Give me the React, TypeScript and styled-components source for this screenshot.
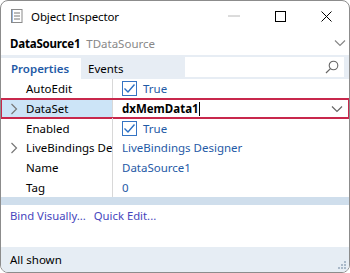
import React from "react";
import styled, { createGlobalStyle } from "styled-components";

const Global = createGlobalStyle`
  html, body { margin: 0; padding: 0; background: #ffffff; }
  * { box-sizing: border-box; }
`;

const FONT = `"Noto Sans", "Open Sans", Arial, sans-serif`;

const Window = styled.div`
  width: 350px;
  height: 273px;
  border: 1px solid #8c8c8c;
  border-radius: 8px;
  overflow: hidden;
  display: flex;
  flex-direction: column;
  font-family: ${FONT};
  font-size: 11.5px;
  color: #000;
  background: #fff;
`;

const TitleBar = styled.div`
  height: 30px;
  flex: none;
  display: flex;
  align-items: center;
  padding-left: 10px;
`;

const TitleText = styled.span`
  margin-left: 8px;
  font-size: 11.5px;
  letter-spacing: -0.1px;
`;

const Controls = styled.div`
  margin-left: auto;
  display: flex;
  height: 100%;
`;

const CtrlBtn = styled.div`
  width: 46px;
  height: 100%;
  display: flex;
  align-items: center;
  justify-content: center;
`;

const Header = styled.div`
  height: 24px;
  flex: none;
  display: flex;
  align-items: center;
  padding-left: 9px;
  padding-right: 3px;
  gap: 6px;
`;

const CompName = styled.span`
  font-weight: 700;
  letter-spacing: -0.2px;
`;

const CompType = styled.span`
  color: #888;
`;

const HeaderChevron = styled.div`
  margin-left: auto;
  display: flex;
  align-items: center;
`;

const TabStrip = styled.div`
  height: 24px;
  flex: none;
  display: flex;
  align-items: stretch;
  background: #e7edf4;
  padding-top: 3px;
  padding-right: 5px;
`;

const Tab = styled.div<{ $active?: boolean }>`
  padding: 0 ${(p) => (p.$active ? "10px" : "7px")};
  display: flex;
  align-items: center;
  background: ${(p) => (p.$active ? "#ffffff" : "transparent")};
  color: ${(p) => (p.$active ? "#1f5aa6" : "#000")};
  font-weight: ${(p) => (p.$active ? 600 : 400)};
  padding-bottom: 1px;
  width: ${(p) => (p.$active ? "80px" : "auto")};
`;

const Search = styled.div`
  margin-left: auto;
  width: 159px;
  margin-top: -1px;
  margin-bottom: 2px;
  background: #fff;
  display: flex;
  align-items: center;
  justify-content: flex-end;
  padding-right: 5px;
`;

const Grid = styled.div`
  flex: none;
  display: flex;
  flex-direction: column;
`;

const Row = styled.div<{ $selected?: boolean }>`
  height: 19.7px;
  display: grid;
  grid-template-columns: 112px 1fr;
  position: relative;
  ${(p) =>
    p.$selected
      ? `
    &::after {
      content: "";
      position: absolute;
      inset: -1px -1px -1px -1px;
      border: 2px solid #c8284c;
      pointer-events: none;
    }
  `
      : ""}
`;

const NameCell = styled.div<{ $selected?: boolean }>`
  display: flex;
  align-items: center;
  border-right: 1px solid #d8d8d8;
  background: ${(p) => (p.$selected ? "#cce4f7" : "transparent")};
  white-space: nowrap;
  overflow: hidden;
`;

const Expander = styled.div`
  width: 25px;
  flex: none;
  display: flex;
  align-items: center;
  justify-content: center;
  padding-left: 1px;
`;

const ValueCell = styled.div<{ $edit?: boolean }>`
  display: flex;
  align-items: center;
  padding-left: ${(p) => (p.$edit ? "9px" : "9px")};
  color: #1f5aa6;
  white-space: nowrap;
  overflow: hidden;
  gap: 6px;
  ${(p) => (p.$edit ? "color:#000;font-weight:700;padding-right:6px;" : "")}
`;

const Check = styled.div`
  width: 15px;
  height: 15px;
  border: 1px solid #3574c4;
  display: flex;
  align-items: center;
  justify-content: center;
  background: #fff;
`;

const Caret = styled.span`
  display: inline-block;
  width: 1px;
  height: 14px;
  background: #000;
  margin-left: -6px;
`;

const EditChevron = styled.div`
  margin-left: auto;
  display: flex;
  align-items: center;
`;

const Splitter = styled.div`
  height: 8px;
  flex: none;
  background: #cfdeec;
`;

const Links = styled.div`
  flex: none;
  height: 21px;
  display: flex;
  align-items: center;
  padding-left: 9px;
  gap: 8px;
  color: #4646bd;
  font-size: 11.3px;
`;

const Spacer = styled.div`
  flex: 1;
`;

const StatusBar = styled.div`
  height: 25px;
  flex: none;
  background: #e6edf4;
  display: flex;
  align-items: center;
  padding-left: 9px;
  position: relative;
`;

const Grip = styled.svg`
  position: absolute;
  right: 2px;
  bottom: 2px;
`;

const Chevron = ({ dir, color = "#777" }: { dir: "right" | "down"; color?: string }) =>
  dir === "right" ? (
    <svg width="8" height="12" viewBox="0 0 8 12">
      <path d="M1.5 1 L6.5 6 L1.5 11" fill="none" stroke={color} strokeWidth="1.2" />
    </svg>
  ) : (
    <svg width="12" height="8" viewBox="0 0 12 8">
      <path d="M1 1.5 L6 6.5 L11 1.5" fill="none" stroke={color} strokeWidth="1.2" />
    </svg>
  );

const CheckMark = () => (
  <svg width="13" height="13" viewBox="0 0 13 13">
    <path d="M1.5 6.5 L5 10 L11.5 2.5" fill="none" stroke="#2b6fc4" strokeWidth="1.4" />
  </svg>
);

type Prop = {
  name: string;
  value: string;
  expandable?: boolean;
  check?: boolean;
  selected?: boolean;
};

const props: Prop[] = [
  { name: "AutoEdit", value: "True", check: true },
  { name: "DataSet", value: "dxMemData1", expandable: true, selected: true },
  { name: "Enabled", value: "True", check: true },
  { name: "LiveBindings Designer", value: "LiveBindings Designer", expandable: true },
  { name: "Name", value: "DataSource1" },
  { name: "Tag", value: "0" },
];

export default function App() {
  return (
    <>
      <Global />
      <Window>
        <TitleBar>
          <svg width="12" height="14" viewBox="0 0 12 14">
            <rect x="0.5" y="0.5" width="1" height="13" fill="#2f6fc0" />
            <rect x="0.5" y="0.5" width="10.5" height="13" fill="none" stroke="#8a8a8a" strokeWidth="1" />
            <line x1="3" y1="4" x2="9" y2="4" stroke="#777" />
            <line x1="3" y1="7" x2="9" y2="7" stroke="#777" />
            <line x1="3" y1="10" x2="9" y2="10" stroke="#777" />
          </svg>
          <TitleText>Object Inspector</TitleText>
          <Controls>
            <CtrlBtn>
              <svg width="12" height="2" viewBox="0 0 12 2">
                <line x1="0" y1="1" x2="12" y2="1" stroke="#b8b8b8" />
              </svg>
            </CtrlBtn>
            <CtrlBtn>
              <svg width="11" height="11" viewBox="0 0 11 11">
                <rect x="0.5" y="0.5" width="10" height="10" fill="none" stroke="#000" />
              </svg>
            </CtrlBtn>
            <CtrlBtn>
              <svg width="11" height="11" viewBox="0 0 11 11">
                <path d="M0.5 0.5 L10.5 10.5 M10.5 0.5 L0.5 10.5" stroke="#000" strokeWidth="1" />
              </svg>
            </CtrlBtn>
          </Controls>
        </TitleBar>
        <Header>
          <CompName>DataSource1</CompName>
          <CompType>TDataSource</CompType>
          <HeaderChevron>
            <Chevron dir="down" color="#888" />
          </HeaderChevron>
        </Header>
        <TabStrip>
          <Tab $active>Properties</Tab>
          <Tab>Events</Tab>
          <Search>
            <svg width="14" height="14" viewBox="0 0 14 14">
              <circle cx="8.5" cy="5.5" r="4.3" fill="none" stroke="#666" strokeWidth="1.1" />
              <line x1="5.4" y1="8.6" x2="1" y2="13" stroke="#666" strokeWidth="1.2" />
            </svg>
          </Search>
        </TabStrip>
        <Grid>
          {props.map((p) => (
            <Row key={p.name} $selected={p.selected}>
              <NameCell $selected={p.selected}>
                <Expander>{p.expandable && <Chevron dir="right" />}</Expander>
                {p.name}
              </NameCell>
              <ValueCell $edit={p.selected}>
                {p.check && (
                  <Check>
                    <CheckMark />
                  </Check>
                )}
                {p.value}
                {p.selected && (
                  <>
                    <Caret />
                    <EditChevron>
                      <Chevron dir="down" color="#666" />
                    </EditChevron>
                  </>
                )}
              </ValueCell>
            </Row>
          ))}
        </Grid>
        <Splitter />
        <Links>
          <span>Bind Visually...</span>
          <span>Quick Edit...</span>
        </Links>
        <Spacer />
        <StatusBar>
          All shown
          <Grip width="9" height="9" viewBox="0 0 9 9">
            <rect x="6" y="0" width="2" height="2" fill="#a9b9c9" />
            <rect x="3" y="3" width="2" height="2" fill="#a9b9c9" />
            <rect x="6" y="3" width="2" height="2" fill="#a9b9c9" />
            <rect x="0" y="6" width="2" height="2" fill="#a9b9c9" />
            <rect x="3" y="6" width="2" height="2" fill="#a9b9c9" />
            <rect x="6" y="6" width="2" height="2" fill="#a9b9c9" />
          </Grip>
        </StatusBar>
      </Window>
    </>
  );
}
